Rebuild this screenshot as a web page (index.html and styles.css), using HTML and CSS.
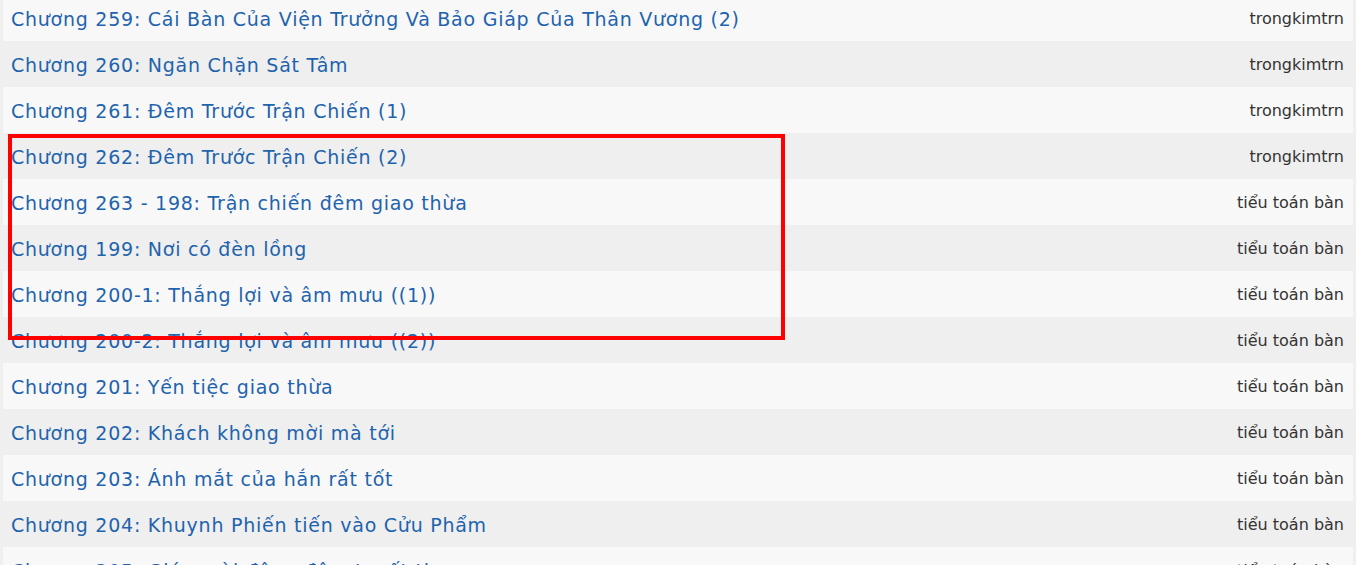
FILE: index.html
```html
<!DOCTYPE html>
<html lang="vi">
<head>
  <meta charset="UTF-8" />
  <meta name="viewport" content="width=device-width, initial-scale=1.0"/>
  <title>Danh sách chương</title>
  <link rel="stylesheet" href="styles.css">
</head>
<body>

  <ul class="chapter-list">
    <li class="row"><a href="#">Chương 259: Cái Bàn Của Viện Trưởng Và Bảo Giáp Của Thân Vương (2)</a><span class="author">trongkimtrn</span></li>
    <li class="row"><a href="#">Chương 260: Ngăn Chặn Sát Tâm</a><span class="author">trongkimtrn</span></li>
    <li class="row"><a href="#">Chương 261: Đêm Trước Trận Chiến (1)</a><span class="author">trongkimtrn</span></li>
    <li class="row"><a href="#">Chương 262: Đêm Trước Trận Chiến (2)</a><span class="author">trongkimtrn</span></li>
    <li class="row"><a href="#">Chương 263 - 198: Trận chiến đêm giao thừa</a><span class="author">tiểu toán bàn</span></li>
    <li class="row"><a href="#">Chương 199: Nơi có đèn lồng</a><span class="author">tiểu toán bàn</span></li>
    <li class="row"><a href="#">Chương 200-1: Thắng lợi và âm mưu ((1))</a><span class="author">tiểu toán bàn</span></li>
    <li class="row"><a href="#">Chương 200-2: Thắng lợi và âm mưu ((2))</a><span class="author">tiểu toán bàn</span></li>
    <li class="row"><a href="#">Chương 201: Yến tiệc giao thừa</a><span class="author">tiểu toán bàn</span></li>
    <li class="row"><a href="#">Chương 202: Khách không mời mà tới</a><span class="author">tiểu toán bàn</span></li>
    <li class="row"><a href="#">Chương 203: Ánh mắt của hắn rất tốt</a><span class="author">tiểu toán bàn</span></li>
    <li class="row"><a href="#">Chương 204: Khuynh Phiến tiến vào Cửu Phẩm</a><span class="author">tiểu toán bàn</span></li>
    <li class="row"><a href="#">Chương 205: Gió mười đêm, đêm tuyết ti</a><span class="author">tiểu toán bàn</span></li>
  </ul>

  <!-- khung đánh dấu -->
  <div class="highlight"></div>

</body>
</html>
```

FILE: styles.css
```css
body {
  margin: 0;
  background-color: #efefef;
  font-family: 'DejaVu Sans', Verdana, sans-serif;
  overflow: hidden;
}
.chapter-list {
  list-style: none;
  margin: -5px 0 0;
  padding: 0 3px;
}
.row {
  display: flex;
  align-items: center;
  justify-content: space-between;
  height: 46px;
  padding: 1px 9px 0 8px;
  box-sizing: border-box;
}
.row:nth-child(odd) {
  background-color: #f8f8f8;
}
.row a {
  font-size: 19px;
  letter-spacing: 0.75px;
  color: #1e63ad;
  text-decoration: none;
  white-space: nowrap;
}
.author {
  font-size: 16px;
  color: #333;
  white-space: nowrap;
}
.highlight {
  position: absolute;
  left: 8px;
  top: 134px;
  width: 777px;
  height: 206px;
  box-sizing: border-box;
  border: 4px solid #ff0000;
}
```
